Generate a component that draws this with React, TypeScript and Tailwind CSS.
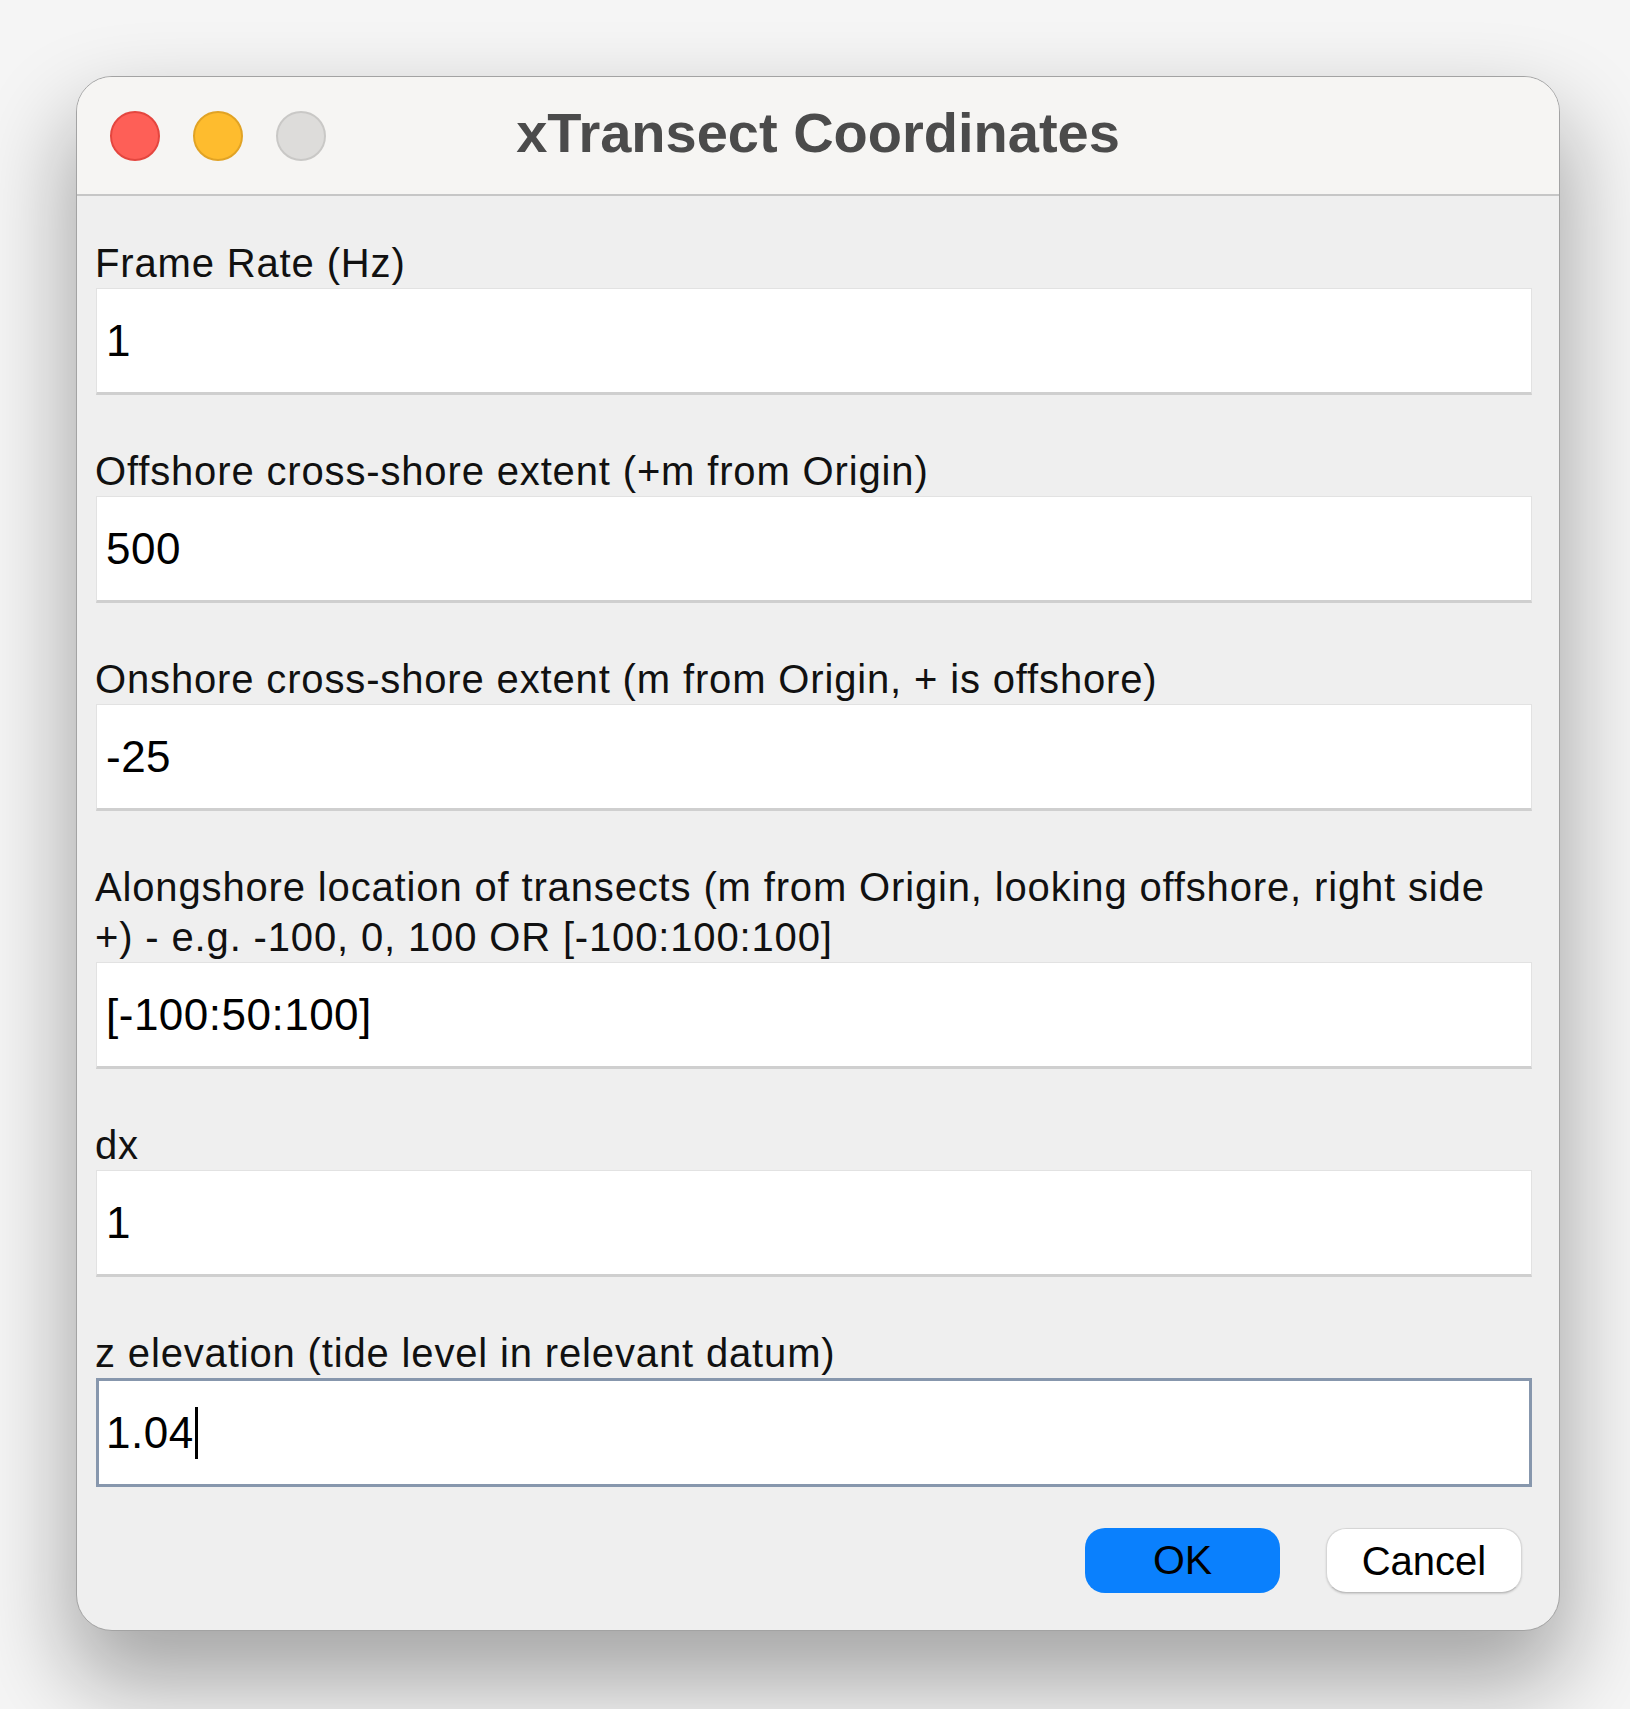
import React from 'react'

const FIELDS = [
  { label: ['Frame Rate (Hz)'], value: '1' },
  { label: ['Offshore cross-shore extent (+m from Origin)'], value: '500' },
  { label: ['Onshore cross-shore extent (m from Origin, + is offshore)'], value: '-25' },
  {
    label: [
      'Alongshore location of transects (m from Origin, looking offshore, right side',
      '+) - e.g. -100, 0, 100 OR [-100:100:100]',
    ],
    value: '[-100:50:100]',
  },
  { label: ['dx'], value: '1' },
]

function Field({ label, value }: { label: string[]; value: string }) {
  return (
    <div className="flex flex-col">
      <div className="text-[40px] leading-[50px] tracking-[0.85px] text-[#111] pl-[18px]">
        {label.map((l, i) => (
          <div key={i} className="whitespace-nowrap">{l}</div>
        ))}
      </div>
      <div className="ml-[19px] h-[107px] bg-white border border-[#e2e2e2] border-b-[3px] border-b-[#cfcfcf] flex items-center pl-[9px] text-[44px] tracking-[0.5px] text-black">
        {value}
      </div>
    </div>
  )
}

export default function App() {
  return (
    <div
      className="min-h-[1709px] w-[1630px] bg-[#f5f5f5] pt-[76px] pl-[76px]"
      style={{ fontFamily: '"Liberation Sans", Arial, sans-serif' }}
    >
      <div className="w-[1484px] rounded-[36px] border border-[#a3a3a3] bg-[#efefef] overflow-hidden shadow-[0_46px_90px_6px_rgba(0,0,0,0.33)]">
        {/* title bar */}
        <div className="relative h-[119px] bg-[#f6f5f3] border-b-2 border-[#c6c6c6] flex items-center">
          <div className="flex items-center gap-[33px] pl-[33px]">
            <span className="w-[50px] h-[50px] rounded-full bg-[#fe5f57] border-2 border-[#e4463f]" />
            <span className="w-[50px] h-[50px] rounded-full bg-[#febc2e] border-2 border-[#e1a325]" />
            <span className="w-[50px] h-[50px] rounded-full bg-[#dddcda] border-2 border-[#c9c8c6]" />
          </div>
          <div className="absolute inset-0 flex items-center justify-center pb-[6px] text-[56px] font-bold text-[#4b4b4b]">
            xTransect Coordinates
          </div>
        </div>

        {/* form */}
        <div className="pt-[42px] pr-[27px] flex flex-col gap-[51px]">
          {FIELDS.map((f, i) => (
            <Field key={i} label={f.label} value={f.value} />
          ))}
          <div className="flex flex-col">
            <div className="text-[40px] leading-[50px] tracking-[0.85px] text-[#111] pl-[18px] whitespace-nowrap">
              z elevation (tide level in relevant datum)
            </div>
            <div className="ml-[19px] h-[109px] bg-white border-[3px] border-[#8797ad] flex items-center pl-[7px] text-[44px] tracking-[0.5px] text-black">
              1.04
              <span className="inline-block w-[3px] h-[52px] bg-black ml-[1px]" />
            </div>
          </div>
        </div>

        {/* buttons */}
        <div className="flex justify-end gap-[46px] pr-[37px] pt-[41px] pb-[37px]">
          <button className="w-[195px] h-[65px] rounded-[20px] bg-[#0a80fd] text-[41px] text-black flex items-center justify-center">
            OK
          </button>
          <button className="w-[196px] h-[65px] rounded-[20px] bg-white border border-[#d6d6d6] border-b-[#bdbdbd] shadow-[0_1px_2px_rgba(0,0,0,0.15)] text-[40px] text-black flex items-center justify-center">
            Cancel
          </button>
        </div>
      </div>
    </div>
  )
}
